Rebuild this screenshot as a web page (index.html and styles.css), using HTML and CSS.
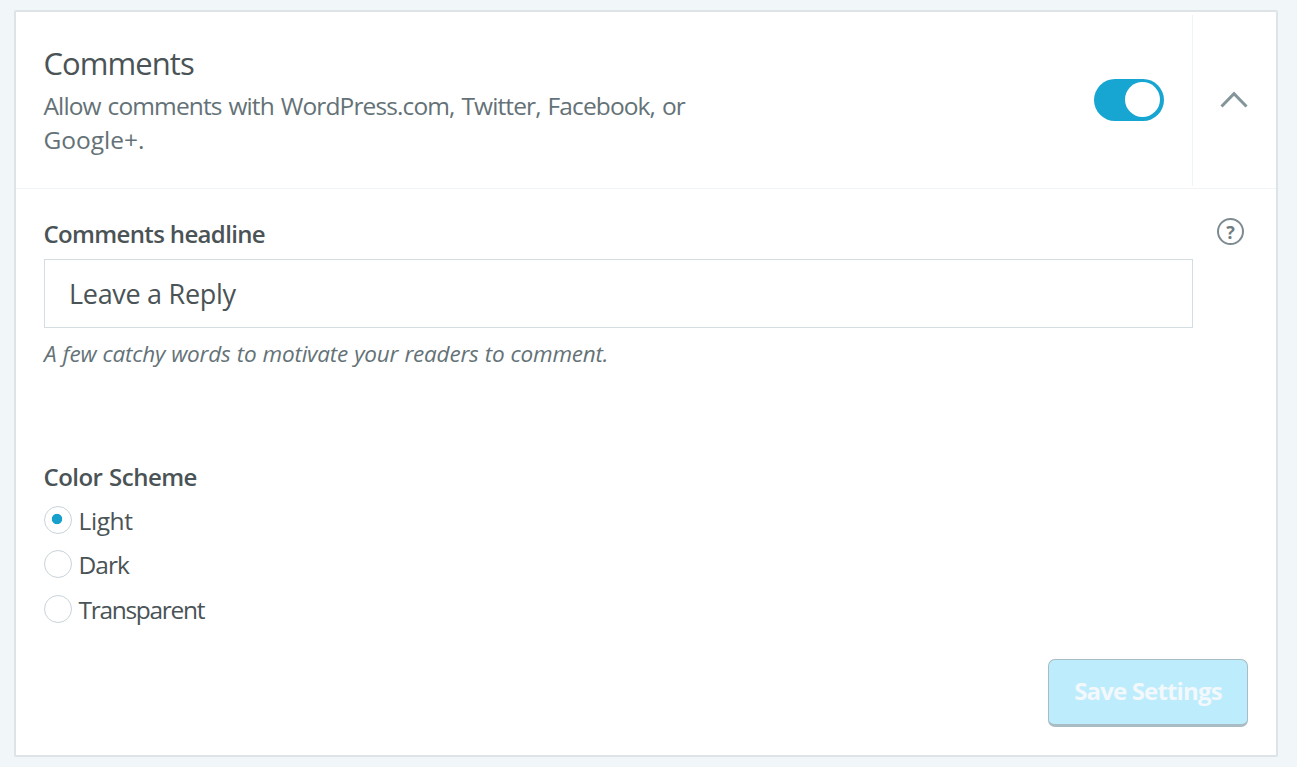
FILE: index.html
```html
<!DOCTYPE html>
<html lang="en">
<head>
<meta charset="utf-8">
<title>Comments settings</title>
<link rel="stylesheet" href="styles.css">
</head>
<body>
<main class="card">
  <header class="card-header">
    <div class="summary">
      <h1 class="title">Comments</h1>
      <p class="description"><span class="first-line">Allow comments with WordPress.com, Twitter, Facebook, or</span><br>Google+.</p>
    </div>
    <div class="toggle"><span class="knob"></span></div>
    <div class="expander">
      <svg width="28" height="18" viewBox="0 0 28 18" fill="none" stroke="#84949b" stroke-width="3"><path d="M1.5 15.5 14 2.7 26.5 15.5"/></svg>
    </div>
  </header>
  <section class="card-body">
    <div class="field">
      <div class="field-main">
        <div class="label headline-label">Comments headline</div>
        <div class="text-input"><span class="input-value">Leave a Reply</span></div>
        <p class="hint">A few catchy words to motivate your readers to comment.</p>
      </div>
      <div class="help"><span class="help-mark">?</span></div>
    </div>
    <div class="label scheme-label">Color Scheme</div>
    <div class="options">
      <div class="option"><span class="radio checked"></span><span class="light">Light</span></div>
      <div class="option"><span class="radio"></span><span class="dark">Dark</span></div>
      <div class="option"><span class="radio"></span><span class="transparent">Transparent</span></div>
    </div>
    <div class="actions"><div class="save"><span class="save-text">Save Settings</span></div></div>
  </section>
</main>
</body>
</html>
```
FILE: styles.css
```css
* { box-sizing: border-box; }
body {
  margin: 0;
  height: 767px;
  padding: 10px 19px 10px 14px;
  background: #f1f6f9;
  font-family: "Open Sans", "Noto Sans", sans-serif;
  color: #4a5356;
  overflow: hidden;
  white-space: nowrap;
}
.card {
  height: 747px;
  background: #fff;
  border: 2px solid #dde3e7;
  border-radius: 2px;
}
.card-header {
  height: 177px;
  display: flex;
  align-items: center;
  border-bottom: 1px solid #f0f4f7;
}
.summary { flex: 1; align-self: flex-start; padding: 30px 0 0 27.5px; }
.title { margin: 0; font-size: 31px; font-weight: 400; line-height: 42px; letter-spacing: -0.95px; }
.description { margin: 5px 0 0; font-size: 24.5px; line-height: 34px; color: #647277; }
.first-line { letter-spacing: -0.88px; word-spacing: 1.4px; }
.toggle {
  width: 70px;
  height: 42px;
  padding: 3px 4px;
  margin-right: 28px;
  border-radius: 21px;
  background: #17a5d2;
  display: flex;
  justify-content: flex-end;
}
.knob { width: 35px; height: 35px; border-radius: 50%; background: #fff; }
.expander {
  width: 84px;
  height: 171px;
  padding-right: 2px;
  border-left: 1px solid #edf3f6;
  display: flex;
  align-items: center;
  justify-content: center;
}
.card-body { padding: 28px 28px 0; }
.field { display: flex; justify-content: space-between; height: 233px; }
.field-main { width: 1149px; }
.label { font-size: 24px; font-weight: 600; line-height: 34px; text-indent: -0.5px; }
.headline-label { letter-spacing: -0.65px; }
.text-input {
  margin-top: 8px;
  height: 69px;
  padding: 0 24px;
  border: 1px solid #d3dde2;
  font-size: 27px;
  line-height: 68px;
  letter-spacing: -0.3px;
}
.hint { margin: 10px 0 0; font-size: 22.5px; line-height: 32px; font-style: italic; letter-spacing: -0.2px; word-spacing: 0.5px; color: #647277; }
.help {
  width: 27px;
  height: 27px;
  margin: 1px 4px 0 0;
  border: 2px solid #7d8b91;
  border-radius: 50%;
  color: #6f7c82;
  font-size: 18px;
  font-weight: 700;
  line-height: 24px;
  text-align: center;
}
.scheme-label { margin-top: 10px; letter-spacing: -0.53px; word-spacing: 1px; }
.options { margin-top: 4px; }
.option {
  display: flex;
  align-items: center;
  gap: 6.5px;
  height: 44.5px;
  font-size: 24.5px;
}
.light { letter-spacing: -0.4px; }
.dark { letter-spacing: -1px; }
.transparent { letter-spacing: -1.3px; }
.radio {
  width: 28px;
  height: 28px;
  margin-top: -1px;
  border: 1.5px solid #c8d3d9;
  border-radius: 50%;
}
.checked { background: radial-gradient(circle at 12px 12px, #17a0cc 4.8px, #fff 5.6px); }
.actions { display: flex; justify-content: flex-end; margin-top: 27px; }
.save {
  width: 200px;
  height: 68px;
  border: 1px solid #a9bcc4;
  border-bottom-width: 3px;
  border-radius: 7px;
  background: #bdedfc;
  color: #f2f8fb;
  font-size: 24px;
  font-weight: 700;
  line-height: 62px;
  letter-spacing: -0.85px;
  text-align: center;
}
```
